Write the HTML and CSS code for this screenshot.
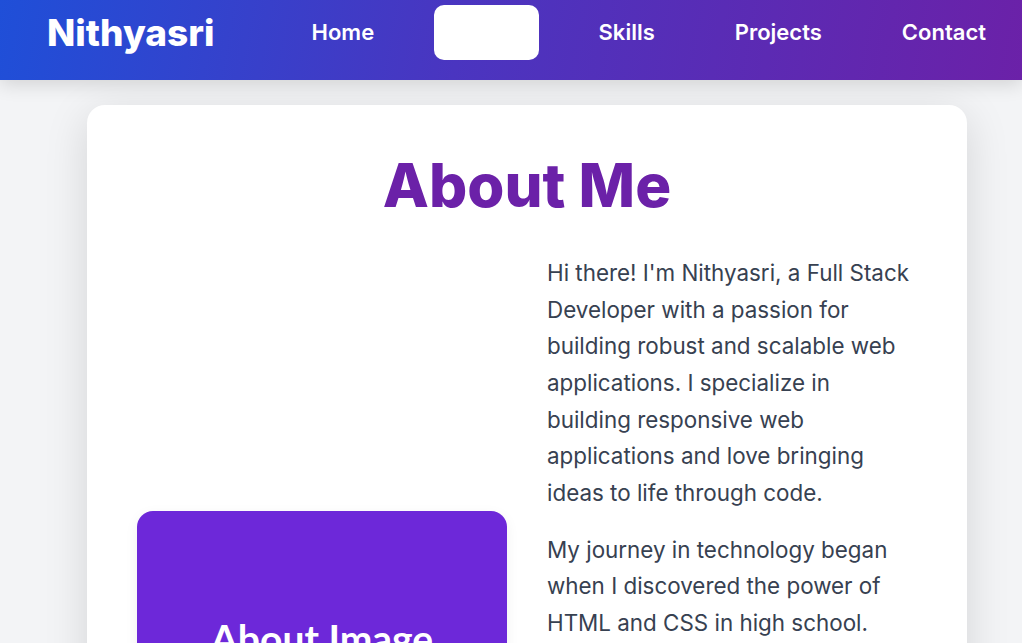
FILE: index.html
```html
<!DOCTYPE html>
<html lang="en">
<head>
<meta charset="UTF-8">
<title>Nithyasri - About</title>
<link rel="stylesheet" href="styles.css">
</head>
<body>
<header class="navbar">
  <div class="logo">Nithyasri</div>
  <nav class="nav-links">
    <a class="nav-link" href="#home">Home</a>
    <a class="nav-link active" href="#about">About</a>
    <a class="nav-link" href="#skills">Skills</a>
    <a class="nav-link" href="#projects">Projects</a>
    <a class="nav-link" href="#contact">Contact</a>
  </nav>
</header>
<main class="section">
  <div class="card">
    <h1 class="title">About Me</h1>
    <div class="about-grid">
      <div class="image-col">
        <div class="about-image">About Image</div>
      </div>
      <div class="text-col">
        <p>Hi there! I'm Nithyasri, a Full Stack Developer with a passion for building robust and scalable web applications. I specialize in building responsive web applications and love bringing ideas to life through code.</p>
        <p>My journey in technology began when I discovered the power of HTML and CSS in high school.</p>
      </div>
    </div>
  </div>
</main>
</body>
</html>
```
FILE: styles.css
```css
* { box-sizing: border-box; }
html, body { margin: 0; padding: 0; }
body {
  background: #f3f4f6;
  font-family: Inter, "Noto Sans", sans-serif;
  overflow: hidden;
}
.navbar {
  height: 80px;
  display: flex;
  align-items: center;
  padding: 0 16px 15px 47px;
  background: linear-gradient(100deg, #1f4fd8 0%, #4a35c0 45%, #6b21a8 100%);
  box-shadow: 0 4px 18px rgba(0,0,0,0.14);
  position: relative;
  z-index: 2;
}
.logo {
  color: #fff;
  font-weight: 800;
  font-size: 37px;
  line-height: 1;
}
.nav-links {
  margin-left: auto;
  display: flex;
  gap: 40px;
}
.nav-link {
  color: #fff;
  text-decoration: none;
  font-size: 22px;
  font-weight: 600;
  line-height: 25px;
  padding: 15px 20px;
  border-radius: 10px;
}
.nav-link.active {
  background: #fff;
  color: #fff;
}
.section {
  padding: 25px 55px 0 87px;
}
.card {
  background: #fff;
  border-radius: 18px;
  padding: 44px 50px 40px;
  box-shadow: 0 10px 44px rgba(0,0,0,0.13);
}
.title {
  margin: 0 0 34px;
  text-align: center;
  color: #6b21a8;
  font-size: 60px;
  font-weight: 800;
  line-height: 1.2;
}
.about-grid {
  display: grid;
  grid-template-columns: 1fr 1fr;
  gap: 40px;
}
.image-col {
  padding-top: 256px;
}
.about-image {
  height: 254px;
  background: #6d28d9;
  border-radius: 16px;
  color: #fff;
  font-family: Lato, "Noto Sans", sans-serif;
  font-weight: 700;
  font-size: 39px;
  display: flex;
  align-items: center;
  justify-content: center;
  box-shadow: 0 4px 14px rgba(0,0,0,0.06);
}
.text-col p {
  margin: 0 0 20px;
  color: #374151;
  font-size: 22.4px;
  line-height: 1.637;
}
```
